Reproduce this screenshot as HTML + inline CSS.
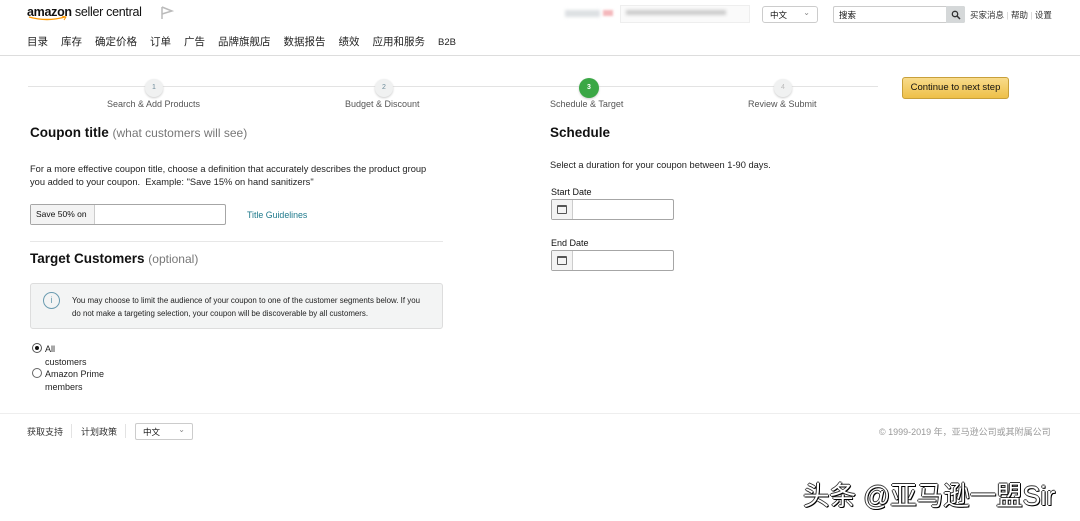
<!DOCTYPE html>
<html><head><meta charset="utf-8"><style>
*{margin:0;padding:0;box-sizing:border-box}
body{width:1080px;height:521px;background:#fff;font-family:"Liberation Sans","Noto Sans CJK SC",sans-serif;color:#111;position:relative;overflow:hidden}
.a{position:absolute;white-space:nowrap}
.nav span{margin-right:13px}
.s{font-size:9px;color:#555}
.circ{position:absolute;width:18px;height:18px;border-radius:50%;background:#f0f1f1;color:#6b8a99;font-size:7px;text-align:center;line-height:18px;box-shadow:0 1px 2px #ccc}
h2{font-size:13.5px;font-weight:bold;color:#111}
h2 small{font-weight:normal;color:#777;font-size:12px}
.sm{font-size:9.3px;color:#222;line-height:13px}
.inp{position:absolute;border:1px solid #a6a6a6;border-radius:2px;height:21px;background:#fff}
.cal{position:absolute;left:0;top:0;width:21px;height:19px;background:#f3f3f3;border-right:1px solid #ccc}
.cal i{position:absolute;left:5px;top:5px;width:10px;height:9px;border:1px solid #555;border-top-width:2px;border-radius:1px}
</style></head><body>
<div class="a" style="left:27px;top:5px;font-size:12.5px;letter-spacing:-0.3px"><b>amazon</b> seller central</div>
<svg class="a" style="left:27px;top:16px" width="44" height="6"><path d="M2 1 Q20 6 38 1" stroke="#f90" stroke-width="1.4" fill="none"/><path d="M35 0 L39 1 L37 4" stroke="#f90" stroke-width="1" fill="none"/></svg>
<svg class="a" style="left:160px;top:6px" width="14" height="14"><path d="M2 1 V13 M2 1 L12 5 L2 8" stroke="#bbb" stroke-width="1.5" fill="none"/></svg>
<div class="a nav" style="left:27px;top:34px;font-size:10.5px;color:#222"><span>目录</span><span>库存</span><span>确定价格</span><span>订单</span><span>广告</span><span>品牌旗舰店</span><span>数据报告</span><span>绩效</span><span>应用和服务</span><span style="font-size:9.5px">B2B</span></div>
<div class="a" style="left:565px;top:10px;width:35px;height:7px;background:#dde0e3;filter:blur(1.5px)"></div>
<div class="a" style="left:603px;top:10px;width:10px;height:6px;background:#f4b8bc;filter:blur(1px)"></div>
<div class="a" style="left:620px;top:5px;width:130px;height:18px;border:1px solid #eee;background:#fafafa"></div>
<div class="a" style="left:626px;top:10px;width:100px;height:5px;background:#ccc;filter:blur(1.5px)"></div>
<div class="a" style="left:762px;top:6px;width:56px;height:17px;border:1px solid #ccc;border-radius:3px;font-size:8.5px;padding:2px 7px">中文<span style="position:absolute;right:7px;top:1px;color:#888;font-size:8px">⌄</span></div>
<div class="a" style="left:833px;top:6px;width:132px;height:17px;border:1px solid #ccc;border-radius:2px;font-size:8.5px;padding:2px 5px">搜索</div>
<div class="a" style="left:946px;top:6px;width:19px;height:17px;background:#d5d8d9;border-radius:0 2px 2px 0"></div>
<svg class="a" style="left:951px;top:10px" width="10" height="10"><circle cx="4" cy="4" r="2.7" stroke="#333" stroke-width="1.3" fill="none"/><path d="M6 6 L9 9" stroke="#333" stroke-width="1.5"/></svg>
<div class="a" style="left:970px;top:9px;font-size:8.5px;color:#333">买家消息 <span style="color:#ccc">|</span> 帮助 <span style="color:#ccc">|</span> 设置</div>
<div class="a" style="left:0;top:55px;width:1080px;height:1px;background:#ddd"></div>
<div class="a" style="left:28px;top:86px;width:850px;height:1px;background:#e3e3e3"></div>
<div class="circ" style="left:145px;top:79px">1</div>
<div class="circ" style="left:375px;top:79px">2</div>
<div class="circ" style="left:579px;top:78px;width:20px;height:20px;line-height:20px;background:#3aa745;color:#fff;font-weight:bold">3</div>
<div class="circ" style="left:774px;top:79px;color:#bbb">4</div>
<div class="a s" style="left:107px;top:99px">Search &amp; Add Products</div>
<div class="a s" style="left:345px;top:99px">Budget &amp; Discount</div>
<div class="a s" style="left:550px;top:99px">Schedule &amp; Target</div>
<div class="a s" style="left:748px;top:99px">Review &amp; Submit</div>
<div class="a" style="left:902px;top:77px;width:107px;height:22px;background:linear-gradient(#f8db8b,#eec048);border:1px solid #c8a03a;border-radius:3px;font-size:9.5px;text-align:center;line-height:20px">Continue to next step</div>
<h2 class="a" style="left:30px;top:125px">Coupon title <small>(what customers will see)</small></h2>
<div class="a sm" style="left:30px;top:163px">For a more effective coupon title, choose a definition that accurately describes the product group<br>you added to your coupon.&nbsp; Example: "Save 15% on hand sanitizers"</div>
<div class="inp" style="left:30px;top:204px;width:196px"><div style="position:absolute;left:0;top:0;width:64px;height:19px;background:#f3f3f3;border-right:1px solid #ccc;font-size:8.5px;line-height:19px;padding-left:5px">Save 50% on</div></div>
<div class="a" style="left:247px;top:210px;font-size:8.8px;color:#1f7a8c">Title Guidelines</div>
<div class="a" style="left:30px;top:241px;width:413px;height:1px;background:#e7e7e7"></div>
<h2 class="a" style="left:30px;top:251px">Target Customers <small>(optional)</small></h2>
<div class="a" style="left:30px;top:283px;width:413px;height:46px;background:#f3f4f4;border:1px solid #ddd;border-radius:3px"></div>
<div class="a" style="left:43px;top:292px;width:17px;height:17px;border:1px solid #6a9bb0;border-radius:50%;font-size:9px;color:#6a9bb0;text-align:center;line-height:15px">i</div>
<div class="a" style="left:72px;top:294px;font-size:7.9px;line-height:13px;color:#222">You may choose to limit the audience of your coupon to one of the customer segments below. If you<br>do not make a targeting selection, your coupon will be discoverable by all customers.</div>
<div class="a" style="left:32px;top:343px;width:10px;height:10px;border:1px solid #555;border-radius:50%"><div style="margin:2px;width:4px;height:4px;background:#111;border-radius:50%"></div></div>
<div class="a" style="left:32px;top:368px;width:10px;height:10px;border:1px solid #666;border-radius:50%"></div>
<div class="a" style="left:45px;top:343px;font-size:9px;line-height:12.5px;color:#222">All<br>customers<br>Amazon Prime<br>members</div>
<h2 class="a" style="left:550px;top:125px">Schedule</h2>
<div class="a sm" style="left:550px;top:159px">Select a duration for your coupon between 1-90 days.</div>
<div class="a" style="left:551px;top:187px;font-size:9px">Start Date</div>
<div class="inp" style="left:551px;top:199px;width:123px"><div class="cal"><i></i></div></div>
<div class="a" style="left:551px;top:238px;font-size:9px">End Date</div>
<div class="inp" style="left:551px;top:250px;width:123px"><div class="cal"><i></i></div></div>
<div class="a" style="left:0;top:413px;width:1080px;height:1px;background:#eee"></div>
<div class="a" style="left:27px;top:425px;font-size:9px;color:#333">获取支持</div>
<div class="a" style="left:71px;top:424px;width:1px;height:14px;background:#e3e3e3"></div>
<div class="a" style="left:81px;top:425px;font-size:9px;color:#333">计划政策</div>
<div class="a" style="left:125px;top:424px;width:1px;height:14px;background:#e3e3e3"></div>
<div class="a" style="left:135px;top:423px;width:58px;height:17px;border:1px solid #ccc;border-radius:2px;font-size:8.5px;padding:2px 7px">中文<span style="position:absolute;right:7px;top:1px;color:#888;font-size:8px">⌄</span></div>
<div class="a" style="left:879px;top:425px;font-size:9px;color:#999">© 1999-2019 年，亚马逊公司或其附属公司</div>
<div class="a" style="left:803px;top:474px;font-size:26.5px;color:#fff;text-shadow:1px 1px 0 #000,-1px 0 0 #333,0 -1px 0 #333,1px 0 0 #333,0 1px 0 #333">头条 @亚马逊一盟Sir</div>
</body></html>
